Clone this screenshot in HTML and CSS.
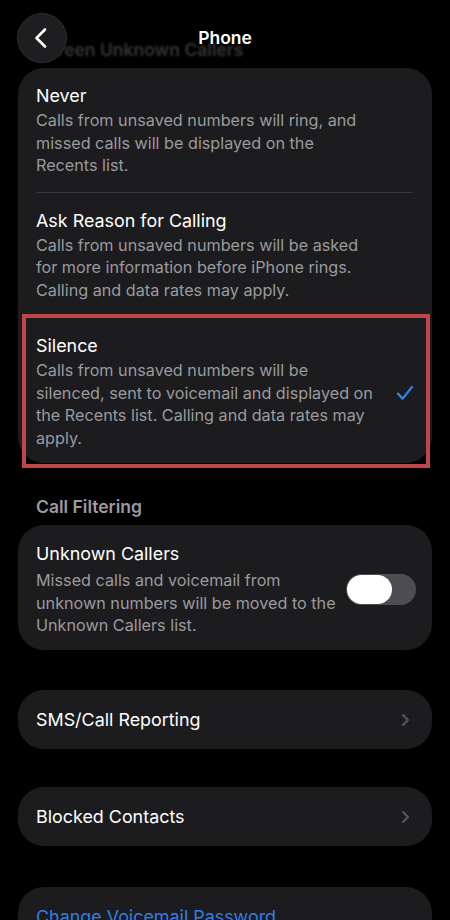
FILE: index.html
```html
<!DOCTYPE html>
<html lang="en">
<head>
<meta charset="utf-8">
<title>Phone</title>
<link rel="stylesheet" href="styles.css">
</head>
<body>
<div class="screen">
  <header class="navbar">
    <button class="back" aria-label="Back">
      <svg width="16" height="22" viewBox="0 0 16 22"><path d="M12 2.5 L3.5 11 L12 19.5" fill="none" stroke="#fff" stroke-width="2.6" stroke-linecap="round" stroke-linejoin="round"/></svg>
    </button>
    <h1 class="nav-title">Phone</h1>
  </header>

  <main class="content">
    <h2 class="section-title faded">Screen Unknown Callers</h2>
    <section class="card">
      <div class="option">
        <div class="option-text">
          <div class="label">Never</div>
          <div class="desc">Calls from unsaved numbers will ring, and<br>missed calls will be displayed on the<br>Recents list.</div>
        </div>
      </div>
      <div class="divider"></div>
      <div class="option option-ask">
        <div class="option-text">
          <div class="label">Ask Reason for Calling</div>
          <div class="desc">Calls from unsaved numbers will be asked<br>for more information before iPhone rings.<br>Calling and data rates may apply.</div>
        </div>
      </div>
      <div class="option option-selected">
        <div class="option-text">
          <div class="label">Silence</div>
          <div class="desc">Calls from unsaved numbers will be<br>silenced, sent to voicemail and displayed on<br>the Recents list. Calling and data rates may<br>apply.</div>
        </div>
        <svg class="check" width="18" height="16" viewBox="0 0 18 16"><path d="M2 8.6 L6.6 13.6 L16 2" fill="none" stroke="#2f84ec" stroke-width="2.3" stroke-linecap="round" stroke-linejoin="round"/></svg>
      </div>
    </section>

    <h2 class="section-title">Call Filtering</h2>
    <section class="card">
      <div class="option option-toggle">
        <div class="option-text">
          <div class="label">Unknown Callers</div>
          <div class="desc">Missed calls and voicemail from<br>unknown numbers will be moved to the<br>Unknown Callers list.</div>
        </div>
        <div class="toggle"><div class="knob"></div></div>
      </div>
    </section>

    <section class="card card-link">
      <span class="link-label">SMS/Call Reporting</span>
      <svg class="chev" width="9" height="14" viewBox="0 0 9 14"><path d="M2 2 L7 7 L2 12" fill="none" stroke="#58585c" stroke-width="2" stroke-linecap="round" stroke-linejoin="round"/></svg>
    </section>

    <section class="card card-link">
      <span class="link-label">Blocked Contacts</span>
      <svg class="chev" width="9" height="14" viewBox="0 0 9 14"><path d="M2 2 L7 7 L2 12" fill="none" stroke="#58585c" stroke-width="2" stroke-linecap="round" stroke-linejoin="round"/></svg>
    </section>

    <section class="card card-link card-last">
      <span class="link-label blue">Change Voicemail Password</span>
    </section>
  </main>
</div>
</body>
</html>
```

FILE: styles.css
```css
* { box-sizing: border-box; }

html, body {
  margin: 0;
  padding: 0;
  background: #000;
}

body {
  font-family: Inter, "Noto Sans", "Liberation Sans", sans-serif;
  color: #fff;
  -webkit-font-smoothing: antialiased;
}

.screen {
  position: relative;
  width: 450px;
  height: 920px;
  overflow: hidden;
}

.navbar {
  position: absolute;
  top: 0;
  left: 0;
  right: 0;
  height: 76px;
  z-index: 5;
}

.back {
  position: absolute;
  left: 17px;
  top: 13px;
  width: 50px;
  height: 50px;
  border-radius: 50%;
  background: #1e1e20;
  border: 1px solid #2e2e31;
  display: flex;
  align-items: center;
  justify-content: center;
  padding: 0 3px 0 0;
}

.nav-title {
  margin: 0;
  position: absolute;
  top: 27px;
  left: 0;
  right: 0;
  text-align: center;
  font-size: 17.5px;
  line-height: 22px;
  font-weight: 600;
  color: #fff;
}

.content {
  padding: 39px 18px 0;
  display: flex;
  flex-direction: column;
}

.section-title {
  margin: 0 0 7px;
  padding-left: 18px;
  font-size: 17.5px;
  line-height: 22px;
  font-weight: 600;
  color: #9c9ca0;
}

.section-title.faded {
  color: #353537;
  filter: blur(0.8px);
}

.card {
  background: #1c1c1e;
  border-radius: 26px;
  margin-bottom: 33px;
}

.option {
  position: relative;
  display: flex;
  align-items: center;
  padding: 17px 16px 15px 18px;
}

.option-ask {
  padding-top: 17px;
  padding-bottom: 18px;
}

.option-selected {
  padding-top: 16px;
  padding-bottom: 14px;
}

.option-selected::after {
  content: "";
  position: absolute;
  top: -5px;
  bottom: -5px;
  left: 4px;
  right: 2px;
  border: 4px solid #c0464a;
}

.option-text {
  flex: 1;
}

.label {
  font-size: 17.9px;
  line-height: 22px;
  color: #fff;
}

.desc {
  margin-top: 2px;
  font-size: 16.2px;
  line-height: 22.5px;
  color: #9a9a9f;
}

.divider {
  height: 1px;
  background: #363638;
  margin: 0 19px 0 18px;
}

.check {
  margin-right: 2px;
  margin-top: 2px;
}

.option-toggle {
  padding-top: 18px;
  padding-bottom: 13px;
}

.option-toggle .desc {
  margin-top: 4px;
}

.toggle {
  width: 70px;
  height: 31px;
  border-radius: 16px;
  background: #4e4e52;
  padding: 1px;
  display: flex;
  flex: none;
}

.knob {
  width: 45px;
  height: 29px;
  border-radius: 15px;
  background: #fff;
}

.card-link {
  display: flex;
  align-items: center;
  justify-content: space-between;
  height: 59px;
  padding: 2px 22px 0 18px;
  margin-top: 7px;
  margin-bottom: 31px;
}

.card-last {
  margin-top: 10px;
}

.link-label {
  font-size: 17.9px;
  line-height: 22px;
  color: #fff;
}

.link-label.blue {
  color: #2f7fe6;
}

.chev {
  flex: none;
}
```
